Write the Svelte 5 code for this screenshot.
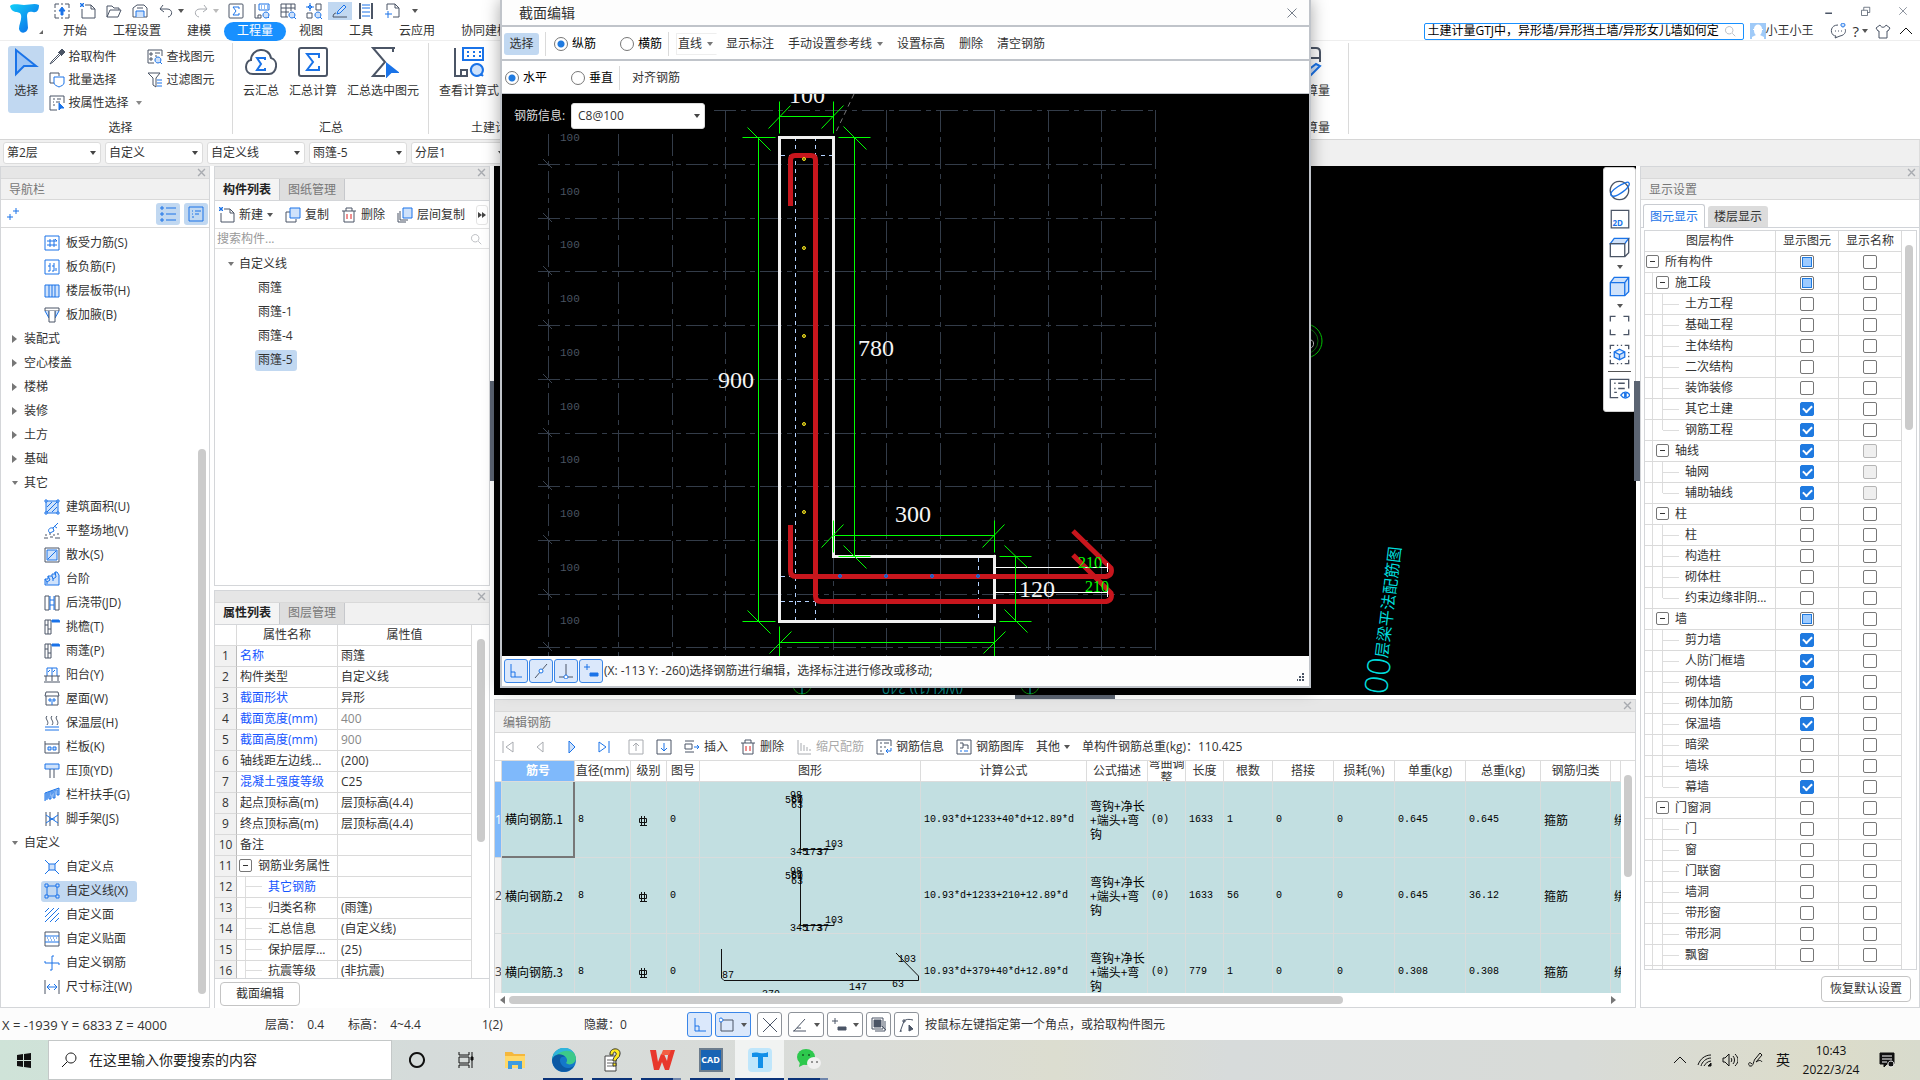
<script>
  const colours = {
    b: '#1a73e8', d: '#4b5566', g: '#a8abb0', r: '#e02020', l: '#cfe2fb', w: '#ffffff', k: '#111111', s: '#9cc4f5',
    n: 'none'
  };

  // Each icon is a list of [stroke, path, fill, stroke width] on a 16 x 16 field.
  const icons = {
    upload: [['d', 'M1 5V1H5M7 1H9M11 1H15V5M15 7V9M15 11V15H11M9 15H7M5 15H1V11M1 9V7', 'n', 1], ['b', 'M8 4L11 8H9V12H7V8H5Z', 'b', 1]],
    newdoc: [['d', 'M5 2H11L15 6V15H2V6', 'n', 1], ['d', 'M11 2V6H15', 'n', 1], ['b', 'M0 0L4 4M4 0L0 4M2 0V4M0 2H4', 'n', 1]],
    open: [['d', 'M1 14V3H6L8 5H13V7M1 14L4 7H15L12 14Z', 'n', 1]],
    save: [['d', 'M1 14V5L5 2H12L15 5V14Z', 'n', 1], ['b', 'M4 14V8H12V14', 'l', 1], ['d', 'M5 5H11', 'n', 1]],
    undo: [['d', 'M5 2L2 6L6 9M2 6H9C15 6 15 13 10 14', 'n', 1]],
    redo: [['g', 'M11 2L14 6L10 9M14 6H7C1 6 1 13 6 14', 'n', 1]],
    sigma: [['d', 'M1 2Q1 1 2 1H14Q15 1 15 2V14Q15 15 14 15H2Q1 15 1 14Z', 'n', 1], ['b', 'M11 6V4H5L8 8L5 12H11V10', 'n', 1]],
    calc: [['d', 'M1 1V15H7V12H4V15', 'n', 1], ['b', 'M5 1H15V7H5Z', 'n', 1], ['b', 'M7 3H8M10 3H11M13 3H14M7 5H8M10 5H11M13 5H14', 'n', 1], ['b', 'M12 9A3 3 0 1 1 11.900 9ZM14 14L15 15', 'l', 1]],
    gridfind: [['d', 'M15 7V1H1V14H8M1 5H15M1 9H9M6 1V14M11 1V8', 'n', 1], ['b', 'M12 9A3 3 0 1 1 11.900 9ZM14 14L16 16', 'l', 1]],
    nodes: [['b', 'M4 0V8M0 4H8M2 4L4 2L6 4L4 6Z', 'n', 1], ['d', 'M10 1H15V7H10ZM1 10H6V15H1Z', 'n', 1], ['b', 'M12 9A3 3 0 1 1 11.900 9ZM14 14L16 16', 'l', 1]],
    pen: [['b', 'M5 11L6 8L12 2L14 4L8 10Z', 'l', 1], ['d', 'M1 14H15M1 14C1 11 3 10 4 10', 'n', 1]],
    fence: [['d', 'M2 0V16M14 0V16', 'n', 2], ['b', 'M4 2H12M4 5H12M4 9H12M4 13H12', 'n', 1]],
    crop: [['d', 'M3 7V1H11L15 5V14H9M11 1V5H15', 'n', 1], ['b', 'M4 8V15M1 11H8', 'n', 1]],
    cursor: [['b', 'M3 2V14L7 10H13Z', 's', 1]],
    pick: [['d', 'M9 3L13 7M10 5L3 12L1 15L4 13L11 6', 'n', 1], ['d', 'M10 3L13 0L16 3L13 6Z', 'd', 1]],
    batch: [['d', 'M5 11H1V1H10V4', 'n', 1], ['b', 'M5 5H15V11C15 13 12 14 10 15C8 14 5 13 5 11Z', 'w', 1]],
    attrsel: [['d', 'M15 8V1H1V15H8M4 4H6M4 7H5M4 10H6M8 4H12M7 7H11', 'n', 1], ['b', 'M10 8V15L12 13H15Z', 'b', 1]],
    find: [['d', 'M15 7V1H1V14H7M3 4H5V6H3ZM3 9H5V11H3ZM8 4H13M8 7H10', 'n', 1], ['b', 'M11 8A3 3 0 1 1 10.900 8ZM13 13L15 15', 'l', 1]],
    filter: [['d', 'M1 1H13L9 6V15L6 13V6Z', 'n', 1], ['b', 'M10 8H15M10 11H15M10 14H15', 'n', 1]],
    cloud: [['d', 'M4 14C-1 14 0 7 3 7C3 1 12 0 13 6C17 7 16 14 12 14Z', 'n', 1], ['b', 'M10 7V6H6L8 9L6 12H10V11', 'n', 1]],
    sum: [['d', 'M14 1H3L9 8L3 15H9M13 1V3', 'n', 1], ['b', 'M10 9V15L12 13H15Z', 'b', 1]],
    edit: [['d', 'M6 9V1H13Q15 1 15 3V8M6 6H15', 'n', 1], ['b', 'M8 15L9 12L13 9L15 10L10 15Z', 'l', 1]],
    plus: [['b', 'M11 2V8M8 5H14M5 8V14M2 11H8', 'n', 1]],
    list: [['b', 'M1 1H3V3H1ZM1 7H3V9H1ZM1 13H3V15H1ZM6 2H16M6 8H16M6 14H16', 'n', 1]],
    card: [['b', 'M1 1H15V15H1Z', 'n', 1], ['b', 'M4 5H5M7 5H13M4 8H5M7 8H11M4 11H6', 'n', 1]],
    copy: [['d', 'M5 5H1V15H11V12', 'n', 1], ['b', 'M5 1H15V11H5Z', 'l', 1]],
    trash: [['d', 'M1 4H15M5 4V1H11V4M3 4V15H13V4', 'n', 1], ['r', 'M6 7V12M10 7V12', 'n', 1]],
    layers: [['d', 'M1 6V15H9M3 4V13H11', 'n', 1], ['b', 'M6 1H15V11H6Z', 'l', 1]],
    search: [['g', 'M7 2A5 5 0 1 1 6.900 2ZM11 11L15 15', 'n', 1]],
    slab1: [['b', 'M1 1H15V15H1ZM3 6H13M3 10H13M6 4V12M10 4V12M11 4L13 6', 'n', 1]],
    slab2: [['b', 'M1 1H15V15H1ZM6 4V12M10 4V12M4 7H6M8 7H10M4 12H6M8 12H10M12 9V12', 'n', 1]],
    band: [['b', 'M1 2H15V14H1Z', 'l', 1], ['b', 'M5 2V14M8 2V14M11 2V14', 'n', 1]],
    haunch: [['d', 'M1 1H15V4H1Z', 'w', 1], ['b', 'M1 4L5 11V4M15 4L11 11V4', 'l', 1], ['d', 'M5 4V15H11V4', 'w', 1]],
    area: [['b', 'M2 2H14V14H2ZM3 8L8 3M3 13L13 3M8 13L13 8', 'l', 1], ['b', 'M1 1H3V3H1ZM13 1H15V3H13ZM1 13H3V15H1ZM13 13H15V15H13Z', 'w', 1]],
    level: [['b', 'M6 10C3 8 5 4 9 5L10 8ZM9 5L14 0M10 3L13 5', 'n', 1], ['d', 'M1 12H3M5 11H7M9 12H11M13 11H15M0 15H4M6 14H9M11 15H16', 'n', 1]],
    apron: [['d', 'M1 1H15V15H1Z', 'n', 1], ['b', 'M3 3H13V13H3Z', 'l', 1], ['b', 'M4 12L12 4', 'n', 1]],
    stairs: [['b', 'M1 14V8H4V5H8V3H11V1H13L15 4V14Z', 'l', 1], ['b', 'M1 8L3 11L6 9L4 5M8 5L9 8L12 6L11 1M3 11V13M9 8V10', 'n', 1]],
    strip: [['d', 'M1 1H5V15H1ZM11 1H15V15H11Z', 'n', 1], ['b', 'M6 1V15M10 1V15M6 5H10M6 10H10', 'n', 1]],
    eave: [['d', 'M1 1H7V15H1ZM4 1V15M1 6H4M4 10H7', 'n', 1], ['b', 'M8 1H15L16 3H8Z', 'b', 1]],
    balcony: [['b', 'M3 9V1H13V9M8 1V9M4 5L6 3M9 5L11 3', 'n', 1], ['d', 'M0 9H16M2 9V14M14 9V14M8 9V14M0 15H16', 'n', 1]],
    roof: [['d', 'M2 1H14L15 5H1ZM2 5V14H14V5', 'n', 1], ['b', 'M5 8H7V10H5ZM9 8H11V10H9ZM8 10V14', 'n', 1]],
    warm: [['d', 'M3 1C0 4 6 6 3 10M8 1C5 4 11 6 8 10M13 1C10 4 16 6 13 10', 'n', 1], ['b', 'M1 12H15M1 15H15', 'n', 1]],
    rail: [['d', 'M1 2V14H15V2M1 5H15', 'n', 1], ['b', 'M4 8H7V11H4ZM9 8H12V11H9Z', 'l', 1]],
    coping: [['b', 'M1 1H15V6H1Z', 'l', 1], ['d', 'M6 6V15M10 6V15', 'n', 1]],
    handrail: [['b', 'M1 14V6L15 1V8H13V3M3 13V6M5 12V5M5 12H7V4M9 11V4M9 11H11V3', 's', 1]],
    scaffold: [['d', 'M2 1V15M14 1V15M6 1V15', 'n', 1], ['b', 'M2 4L14 12M2 12L14 4M5 8H11', 'n', 1]],
    cpoint: [['b', 'M5 5H11V11H5Z', 'l', 1], ['b', 'M1 1L5 5M15 1L11 5M1 15L5 11M15 15L11 11', 'n', 1]],
    cline: [['b', 'M3 3H13V13H3Z', 'n', 1], ['b', 'M1 1H4V4H1ZM12 1H15V4H12ZM1 12H4V15H1ZM12 12H15V15H12Z', 'l', 1]],
    cface: [['b', 'M1 5L5 1M1 10L10 1M1 15L15 1M6 15L15 6M11 15L15 11', 'n', 1]],
    cveneer: [['d', 'M1 1H15V15H1Z', 'n', 1], ['b', 'M1 5H15M1 11H15M3 7H4M6 7H7M9 7H10M12 7H13M4 9H5M7 9H8M10 9H11', 'l', 1]],
    crebar: [['b', 'M8 1V15H6M8 1H10M1 8H15M1 8V6M15 8V10', 'n', 1]],
    dim: [['d', 'M1 1V15M15 1V15', 'n', 1], ['b', 'M3 8H13M6 5L3 8L6 11M10 5L13 8L10 11', 'n', 1]],
    first: [['g', 'M3 2V14M13 3L6 8L13 13Z', 'n', 1]],
    prev: [['g', 'M11 3L5 8L11 13Z', 'n', 1]],
    next: [['b', 'M5 2L11 8L5 14Z', 'l', 1]],
    last: [['b', 'M3 3L10 8L3 13ZM13 2V14', 'n', 1]],
    up: [['g', 'M1 1H15V15H1ZM8 12V4M5 7L8 4L11 7', 'n', 1]],
    down: [['d', 'M1 1H15V15H1Z', 'n', 1], ['b', 'M8 4V12M5 9L8 12L11 9', 'n', 1]],
    insert: [['d', 'M1 2H10M1 13H10M1 5H8V10H1Z', 'n', 1], ['b', 'M10 8H15M13 6L15 8L13 10', 'n', 1]],
    scale: [['g', 'M2 1V15H15M5 4V12M8 6V12M11 8V12M14 10V12', 'n', 1]],
    info: [['d', 'M15 7V1H1V15H8M4 4H6M8 4H13M4 8H6M8 8H10M4 12H6', 'n', 1], ['b', 'M15 9V12H10M12 10L10 12L12 14', 'n', 1]],
    library: [['d', 'M1 1H15V15H1ZM4 4H7V9H4M7 6H12V10', 'n', 1], ['b', 'M4 12H6M8 12H12', 'n', 1]],
    orbit: [['d', 'M8 1A7 7 0 1 1 7.900 1Z', 'n', 1], ['b', 'M2 12C-2 9 14 0 15 2C18 5 5 14 2 12', 'n', 1]],
    flat: [['d', 'M1 1H15V15H1Z', 'n', 1]],
    cube: [['b', 'M1 5L4 1H15L12 5Z', 'l', 1], ['d', 'M1 5H12V15H1ZM15 1V12L12 15', 'n', 1]],
    cubef: [['b', 'M1 5L4 1H15V12L12 15H1Z', 'l', 1], ['b', 'M1 5H12V15M12 5L15 1', 'n', 1]],
    fit: [['d', 'M1 5V1H5M11 1H15V5M15 11V15H11M5 15H1V11', 'n', 1]],
    region: [['d', 'M1 4V1H4M6 1H7M9 1H10M12 1H15V4M15 6V7M15 9V10M15 12V15H12M10 15H9M7 15H6M4 15H1V12M1 10V9M1 7V6', 'n', 1], ['b', 'M8 4L12 6V10L8 12L4 10V6ZM4 6L8 8L12 6M8 8V12', 'l', 1]],
    view: [['d', 'M15 8V1H1V15H7M4 4H5M7 4H12M4 8H5M7 8H12M4 11H6', 'n', 1], ['b', 'M9 13C11 10 14 10 16 13C14 16 11 16 9 13ZM12 12H13V14H12Z', 'n', 1]],
    angle: [['b', 'M3 1V14H14M3 9H7V14', 'n', 1]],
    slash: [['d', 'M2 15L14 1', 'n', 1], ['b', 'M6 8A2 2 0 1 1 8 10A2 2 0 0 1 6 8Z', 'w', 1]],
    perp: [['d', 'M8 1V12M1 14H15', 'n', 1], ['b', 'M8 12A2 2 0 1 1 7.900 12Z', 'w', 1]],
    plusbox: [['b', 'M4 1V7M1 4H7', 'n', 1], ['b', 'M7 10H15V13H7Z', 'b', 1]],
    plusdark: [['d', 'M4 1V7M1 4H7', 'n', 1], ['d', 'M7 10H15V13H7Z', 'd', 1]],
    square: [['d', 'M2 3H14V14H2Z', 'n', 1], ['b', 'M2 1A2 2 0 1 1 1.900 1Z', 'w', 1]],
    cross: [['d', 'M1 1L15 15M15 1L1 15', 'n', 1]],
    lineangle: [['d', 'M2 14L13 2M1 14H14M5 11L9 11', 'n', 1]],
    region2: [['d', 'M1 1H12V12H1Z', 'n', 1], ['d', 'M3 3H10V10H3Z', 'd', 1], ['d', 'M14 4V14H4M11 9L15 13', 'n', 1]],
    curve: [['d', 'M1 15L5 4M5 4C7 2 10 2 14 3M1 14H3M4 3H6V5H4Z', 'n', 1], ['d', 'M10 8V14L14 12Z', 'd', 1]],
    close: [['g', 'M3 3L13 13M13 3L3 13', 'n', 2]],
    closed: [['d', 'M2 2L14 14M14 2L2 14', 'n', 1]],
    min: [['d', 'M3 11H12', 'n', 2]],
    restore: [['d', 'M2 7H10V14H2ZM5 7V3H13V10H10', 'n', 1]],
    chat: [['d', 'M8 2C-1 2 0 13 6 13L5 15L10 13C16 12 16 7 15 6M5 8H6M8 8H9M11 8H12', 'n', 1], ['b', 'M13 0A2 2 0 1 1 12.900 0Z', 'l', 1]],
    shirt: [['d', 'M5 2L1 5L3 8H4V15H12V8H13L15 5L11 2C10 5 6 5 5 2Z', 'n', 1]],
    caretup: [['k', 'M2 11L8 5L14 11', 'n', 1]],
    start: [['k', 'M1 3L7 2V8H1ZM8 2L15 1V8H8ZM1 9H7V15L1 14ZM8 9H15V16L8 15Z', 'k', 0]],
    lens: [['k', 'M10 1A5 5 0 1 1 9.900 1ZM6 10L1 15', 'n', 1]],
    ring: [['k', 'M8 1A7 7 0 1 1 7.900 1Z', 'n', 2]],
    tasks: [['k', 'M1 0V3H11V0M1 16V13H11V16M1 5H11V11H1ZM14 0V16', 'n', 1], ['k', 'M13 5H15V8H13Z', 'k', 1]],
    wifi: [['k', 'M1 13C3 7 8 3 14 3M4 14C5 10 9 6 14 6M7 14C8 12 11 9 14 9', 'n', 1], ['k', 'M11 14L14 11V14Z', 'k', 1]],
    sound: [['k', 'M1 6H3L7 2V14L3 10H1ZM9 6C10 7 10 9 9 10M11 4C13 6 13 10 11 12M13 2C17 6 17 10 13 14', 'n', 1]],
    ink: [['k', 'M5 12C1 8 1 14 3 14C7 15 6 8 9 6L13 1L15 3L9 10C12 8 14 8 15 10', 'n', 1]],
    note: [['k', 'M1 1H15V12H8L5 15V12H1Z', 'k', 1], ['w', 'M3 4H13M3 7H13M3 10H8', 'n', 1], ['w', 'M12 9A3 3 0 1 1 11.900 9Z', 'k', 1]]
  };

  const quickA = ['upload', 'newdoc', 'open', 'save'];
  const quickB = ['sigma', 'calc', 'gridfind', 'nodes', 'pen', 'fence', 'crop'];
  const tabs = ['开始', '工程设置', '建模', '工程量', '视图', '工具', '云应用', '协同建模'];
  const combos = ['第2层', '自定义', '自定义线', '雨篷-5', '分层1'];

  const nav = [
    ['slab1', '板受力筋(S)'], ['slab2', '板负筋(F)'], ['band', '楼层板带(H)'], ['haunch', '板加腋(B)'],
    ['>', '装配式'], ['>', '空心楼盖'], ['>', '楼梯'], ['>', '装修'], ['>', '土方'], ['>', '基础'], ['v', '其它'],
    ['area', '建筑面积(U)'], ['level', '平整场地(V)'], ['apron', '散水(S)'], ['stairs', '台阶'], ['strip', '后浇带(JD)'],
    ['eave', '挑檐(T)'], ['eave', '雨蓬(P)'], ['balcony', '阳台(Y)'], ['roof', '屋面(W)'], ['warm', '保温层(H)'],
    ['rail', '栏板(K)'], ['coping', '压顶(YD)'], ['handrail', '栏杆扶手(G)'], ['scaffold', '脚手架(JS)'],
    ['v', '自定义'], ['cpoint', '自定义点'], ['cline', '自定义线(X)'], ['cface', '自定义面'], ['cveneer', '自定义贴面'],
    ['crebar', '自定义钢筋'], ['dim', '尺寸标注(W)']
  ];

  // name, value, kind: l = linked name, m = muted value, g = group row, c = child row
  const props = [
    ['名称', '雨篷', 'l'], ['构件类型', '自定义线', ''], ['截面形状', '异形', 'l'], ['截面宽度(mm)', '400', 'lm'],
    ['截面高度(mm)', '900', 'lm'], ['轴线距左边线...', '(200)', ''], ['混凝土强度等级', 'C25', 'l'],
    ['起点顶标高(m)', '层顶标高(4.4)', ''], ['终点顶标高(m)', '层顶标高(4.4)', ''], ['备注', '', ''],
    ['钢筋业务属性', '', 'g'], ['其它钢筋', '', 'lc'], ['归类名称', '(雨篷)', 'c'], ['汇总信息', '(自定义线)', 'c'],
    ['保护层厚...', '(25)', 'c'], ['抗震等级', '(非抗震)', 'c']
  ];

  // level, name, element state, name state: 0 off, 1 on, 2 partial, 3 disabled
  const layers = [
    [0, '所有构件', 2, 0], [1, '施工段', 2, 0], [2, '土方工程', 0, 0], [2, '基础工程', 0, 0], [2, '主体结构', 0, 0],
    [2, '二次结构', 0, 0], [2, '装饰装修', 0, 0], [2, '其它土建', 1, 0], [2, '钢筋工程', 1, 0], [1, '轴线', 1, 3],
    [2, '轴网', 1, 3], [2, '辅助轴线', 1, 3], [1, '柱', 0, 0], [2, '柱', 0, 0], [2, '构造柱', 0, 0], [2, '砌体柱', 0, 0],
    [2, '约束边缘非阴...', 0, 0], [1, '墙', 2, 0], [2, '剪力墙', 1, 0], [2, '人防门框墙', 1, 0], [2, '砌体墙', 1, 0],
    [2, '砌体加筋', 0, 0], [2, '保温墙', 1, 0], [2, '暗梁', 0, 0], [2, '墙垛', 0, 0], [2, '幕墙', 1, 0], [1, '门窗洞', 0, 0],
    [2, '门', 0, 0], [2, '窗', 0, 0], [2, '门联窗', 0, 0], [2, '墙洞', 0, 0], [2, '带形窗', 0, 0], [2, '带形洞', 0, 0],
    [2, '飘窗', 0, 0], [2, '', 0, 0]
  ];
  const lastChild = (i) => Boolean(layers[i + 1]) && layers[i + 1][0] < 2;

  const columns = [
    ['', 7], ['筋号', 73], ['直径(mm)', 56], ['级别', 36], ['图号', 33], ['图形', 0], ['计算公式', 166], ['公式描述', 61],
    ['弯曲调整', 38], ['长度', 38], ['根数', 49], ['搭接', 61], ['损耗(%)', 61], ['单重(kg)', 71], ['总重(kg)', 75],
    ['钢筋归类', 70], ['', 10]
  ];
  const bars = [
    ['横向钢筋.1', '10.93*d+1233+40*d+12.89*d', '1633', '1', '0.645', '0.645'],
    ['横向钢筋.2', '10.93*d+1233+210+12.89*d', '1633', '56', '0.645', '36.12'],
    ['横向钢筋.3', '10.93*d+379+40*d+12.89*d', '779', '1', '0.308', '0.308']
  ];

  const gridX = [618, 672, 725, 779, 833, 886, 940, 994, 1048, 1101, 1155];
  const gridY = [164, 218, 271, 325, 379, 433, 486, 540, 594, 647];
  const dims = [
    'M779 116H833M779 101V133M833 101V133M768 128L790 105M821 128L843 105',
    'M758 137V621M742 137H775M747 127L770 150M742 621H775M747 610L770 633',
    'M854 137V556M838 137H870M843 126L866 149M838 556H870M843 545L866 568',
    'M833 535H994M833 520V552M994 520V552M821 547L843 524M982 547L1004 524',
    'M1015 556V621M999 556H1031M1004 545L1027 567M999 621H1031M1004 609L1027 632',
    'M779 642H994M779 626V656M994 626V656M769 653L791 631M983 653L1005 631'
  ];
</script>

{#snippet icon(name, size = 16)}
  <svg class="ico" width={size} height={size} viewBox="0 0 16 16" aria-hidden="true">
    {#each icons[name] as [stroke, d, fill, width]}
      <path {d} stroke={colours[stroke]} fill={colours[fill]} stroke-width={width} />
    {/each}
  </svg>
{/snippet}

{#snippet strip()}
  <div class="strip"><button aria-label="关闭">{@render icon('close', 11)}</button></div>
{/snippet}

<div class="app">
  <header>
    <button class="logo" aria-label="菜单">
      <svg width="30" height="30" viewBox="0 0 30 30" aria-hidden="true">
        <defs><linearGradient id="tg" x1="0" y1="0" x2="1" y2="1"><stop offset="0" stop-color="#12d0f8" /><stop offset="1" stop-color="#0a62e8" /></linearGradient></defs>
        <path d="M1 2C5 -1 10 1 15 1S26 -1 30 1C30 6 28 9 24 8C20 7 18 8 18 12L19 24C18 30 11 30 10 25C10 20 13 16 12 11C11 6 3 11 1 2Z" fill="url(#tg)" />
      </svg>
      <i class="corner"></i>
    </button>
    <div class="headmain">
      <div class="quick">
        {#each quickA as q}<button aria-label={q}>{@render icon(q)}</button>{/each}
        <span class="split"><button aria-label="撤销">{@render icon('undo')}</button><i class="tri"></i></span>
        <span class="split"><button aria-label="重做">{@render icon('redo')}</button><i class="tri pale"></i></span>
        {#each quickB as q}<button class:on={q === 'pen'} aria-label={q}>{@render icon(q)}</button>{/each}
        <i class="tri more"></i>
        <div class="wins">
          <button aria-label="最小化">{@render icon('min', 12)}</button>
          <button aria-label="还原">{@render icon('restore', 12)}</button>
          <button aria-label="退出">{@render icon('closed', 10)}</button>
        </div>
      </div>
      <nav class="tabs">
        {#each tabs as t}<button class:on={t === '工程量'}>{t}</button>{/each}
        <div class="right">
          <label class="help"><input aria-label="搜索帮助" value="土建计量GTJ中，异形墙/异形挡土墙/异形女儿墙如何定" />{@render icon('search', 12)}</label>
          <svg class="avatar" width="16" height="16" viewBox="0 0 16 16" aria-hidden="true"><path d="M0 0H16V16H0Z" fill="#9fcaf8" /><path d="M4 6C4 0 12 0 12 6H13V7H12C12 11 10 12 10 12L14 14V16H2V14L6 12C4 11 4 7 4 7H3V6Z" fill="#fff" /></svg>
          <span class="user">小王小王</span>
          <button aria-label="消息">{@render icon('chat')}</button>
          <button class="q">?<i class="tri"></i></button>
          <button aria-label="皮肤">{@render icon('shirt')}</button>
          <button aria-label="收起">{@render icon('caretup')}</button>
        </div>
      </nav>
    </div>
  </header>

  <div class="ribbon">
    <section class="grp first">
      <div class="tools">
        <button class="big on">{@render icon('cursor', 32)}<span>选择</span></button>
        <div class="col">
          <button>{@render icon('pick')}拾取构件</button>
          <button>{@render icon('batch')}批量选择</button>
          <button>{@render icon('attrsel')}按属性选择<i class="tri"></i></button>
        </div>
        <div class="col">
          <button>{@render icon('find')}查找图元</button>
          <button>{@render icon('filter')}过滤图元</button>
        </div>
      </div>
      <h2>选择</h2>
    </section>
    <section class="grp">
      <div class="tools gap">
        <button class="big">{@render icon('cloud', 32)}<span>云汇总</span></button>
        <button class="big">{@render icon('sigma', 32)}<span>汇总计算</span></button>
        <button class="big">{@render icon('sum', 32)}<span>汇总选中图元</span></button>
      </div>
      <h2>汇总</h2>
    </section>
    <section class="grp results">
      <div class="tools gap"><button class="big">{@render icon('calc', 32)}<span>查看计算式</span></button></div>
      <h2>土建计算结果</h2>
    </section>
    <section class="grp sheet">
      <div class="tools"><button class="big">{@render icon('edit', 32)}<span>表格算量</span></button></div>
      <h2>表格算量</h2>
    </section>
  </div>

  <div class="combos">
    {#each combos as c}
      <span class="sel"><select aria-label={c}><option>{c}</option></select></span>
    {/each}
  </div>

  <main>
    <aside class="panel navp">
      {@render strip()}
      <h3>导航栏</h3>
      <div class="navtools">
        {@render icon('plus')}
        <button aria-label="列表">{@render icon('list')}</button>
        <button aria-label="卡片">{@render icon('card')}</button>
      </div>
      <ul class="navlist">
        {#each nav as [ic, name]}
          {#if ic === '>' || ic === 'v'}
            <li class="cat"><i class={ic === '>' ? 'arr' : 'tri'}></i>{name}</li>
          {:else}
            <li class:sel={ic === 'cline'}><button>{@render icon(ic)}{name}</button></li>
          {/if}
        {/each}
      </ul>
      <i class="thumb navthumb"></i>
    </aside>

    <div class="second">
      <section class="panel comps">
        {@render strip()}
        <div class="ptabs"><button class="on">构件列表</button><button>图纸管理</button></div>
        <div class="ctools">
          <button>{@render icon('newdoc')}新建<i class="tri"></i></button>
          <button>{@render icon('copy')}复制</button>
          <button>{@render icon('trash')}删除</button>
          <button>{@render icon('layers')}层间复制</button>
          <button class="more" aria-label="更多"><i class="arr"></i><i class="arr"></i></button>
        </div>
        <label class="csearch"><input placeholder="搜索构件..." aria-label="搜索构件" />{@render icon('search', 12)}</label>
        <ul class="tree">
          <li><i class="tri"></i>自定义线</li>
          {#each ['雨篷', '雨篷-1', '雨篷-4', '雨篷-5'] as t}
            <li class="leaf"><button class:on={t === '雨篷-5'}>{t}</button></li>
          {/each}
        </ul>
      </section>
      <section class="panel propp">
        {@render strip()}
        <div class="ptabs"><button class="on">属性列表</button><button>图层管理</button></div>
        <div class="ptable">
          <table>
            <colgroup><col class="c1" /><col class="c2" /><col /></colgroup>
            <thead><tr><th></th><th>属性名称</th><th>属性值</th></tr></thead>
            <tbody>
              {#each props as [name, value, kind], i}
                <tr>
                  <td class="n">{i + 1}</td>
                  <td class:link={kind.includes('l')} class:child={kind.includes('c')} class:group={kind === 'g'}>
                    {#if kind === 'g'}<i class="exp"></i>{/if}{name}
                  </td>
                  <td class:muted={kind.includes('m')}>{value}</td>
                </tr>
              {/each}
            </tbody>
          </table>
          <div class="rail"><i class="thumb"></i></div>
        </div>
        <div class="pfoot"><button class="btn">截面编辑</button></div>
      </section>
    </div>

    <div class="centre">
      <div class="viewport">
        <svg class="scene" viewBox="494 166 1142 529" preserveAspectRatio="xMaxYMax slice" aria-hidden="true">
          <circle cx="1305" cy="341" r="17" fill="none" stroke="#00c800" stroke-width="1" />
          <circle cx="1305" cy="341" r="13" fill="none" stroke="#0a6a0a" stroke-width="1" />
          <path d="M1311 340C1315 341 1314 348 1310 348" stroke="#ccc" fill="none" />
          <g transform="translate(1399 547) rotate(-83)" fill="#00dcdc">
            <text class="cad" text-anchor="end" x="0" y="2">层梁平法配筋图</text>
            <text class="zero" text-anchor="end" x="-112" y="6">000</text>
          </g>
          <g fill="none" stroke="#089008"><circle cx="802" cy="685" r="9" /><circle cx="1030" cy="685" r="9" /></g>
          <path d="M802 688V694M1030 688V694" stroke="#0cc" />
          <text transform="translate(963 684) rotate(180)" class="dimcad">(WKL(1)) 240</text>
        </svg>
        <div class="palette">
          <button aria-label="动态观察">{@render icon('orbit', 21)}</button>
          <button aria-label="二维" class="two">{@render icon('flat', 20)}<b>2D</b></button>
          <button aria-label="线框">{@render icon('cube', 21)}</button><i class="tri"></i>
          <button aria-label="实体">{@render icon('cubef', 21)}</button><i class="tri"></i>
          <button aria-label="全屏">{@render icon('fit', 21)}</button>
          <button aria-label="局部">{@render icon('region', 21)}</button>
          <hr />
          <button aria-label="显示">{@render icon('view', 21)}</button>
        </div>
      </div>
      <div class="hsplit"><i></i></div>
      <section class="panel bars">
        {@render strip()}
        <h3>编辑钢筋</h3>
        <div class="btools">
          {#each ['first', 'prev', 'next', 'last'] as n}<button class="step" aria-label={n}>{@render icon(n)}</button>{/each}
          <button aria-label="上移">{@render icon('up')}</button>
          <button aria-label="下移">{@render icon('down')}</button>
          <button>{@render icon('insert')}插入</button>
          <button>{@render icon('trash')}删除</button>
          <button class="off" disabled>{@render icon('scale')}缩尺配筋</button>
          <button>{@render icon('info')}钢筋信息</button>
          <button>{@render icon('library')}钢筋图库</button>
          <button>其他<i class="tri"></i></button>
          <span>单构件钢筋总重(kg)：110.425</span>
        </div>
        <div class="btable">
          <table>
            <colgroup>{#each columns as [, w]}<col style={w ? `width:${w}px` : ''} />{/each}</colgroup>
            <thead><tr>{#each columns as [c], i}<th class:on={i === 1}><span>{c}</span></th>{/each}</tr></thead>
            <tbody>
              {#each bars as [name, formula, len, count, unit, total], i}
                <tr>
                  <td class="idx" class:on={i === 0}>{i + 1}</td>
                  <td class="name" class:on={i === 0}>{name}</td>
                  <td>8</td>
                  <td><svg class="grade" width="12" height="12" viewBox="0 0 12 12" aria-label="三级钢"><path d="M2.500 4.500H9.500V8.500H2.500ZM4.500 2V11M7.500 2V11M3 11.500H10" fill="none" stroke="#111" /></svg></td>
                  <td>0</td>
                  <td class="shape">
                    {#if i < 2}
                      <svg width="220" height="74" viewBox="700 782 220 74">
                        <path d="M800.500 797V848.500H834V844" fill="none" stroke="#111" />
                        <text x="785" y="802">560</text><text x="790" y="797">98</text><text x="791" y="801">87</text><text x="791" y="807">63</text>
                        <text x="825" y="846">103</text><text x="790" y="854">345</text><text x="804" y="854">173</text><text x="817" y="854">37</text>
                      </svg>
                    {:else}
                      <svg width="220" height="74" viewBox="700 934 220 74">
                        <path d="M721.500 948V977L724 979.500H918.500V975L896 952" fill="none" stroke="#111" />
                        <text x="722" y="977">87</text><text x="898" y="961">103</text><text x="849" y="989">147</text><text x="892" y="986">63</text><text x="762" y="996">379</text>
                      </svg>
                    {/if}
                  </td>
                  <td>{formula}</td>
                  <td class="desc">弯钩+净长<br />+端头+弯<br />钩</td>
                  <td>(0)</td><td>{len}</td><td>{count}</td><td>0</td><td>0</td><td>{unit}</td><td>{total}</td>
                  <td class="zh">箍筋</td><td class="zh cut">绑</td>
                </tr>
              {/each}
            </tbody>
          </table>
          <div class="rail"><i class="thumb"></i></div>
        </div>
        <div class="hbar"><i class="arr back"></i><div><i class="thumb"></i></div><i class="arr"></i></div>
      </section>
      <i class="vhandle left"></i><i class="vhandle right"></i>
    </div>

    <aside class="panel disp">
      {@render strip()}
      <h3>显示设置</h3>
      <div class="dtabs"><button class="on">图元显示</button><button>楼层显示</button></div>
      <div class="dtable">
        <table>
          <colgroup><col /><col class="cc" /><col class="cc" /></colgroup>
          <thead><tr><th>图层构件</th><th>显示图元</th><th>显示名称</th></tr></thead>
          <tbody>
            {#each layers as [lvl, name, a, b], i}
              <tr>
                <td class="lv{lvl}" class:end={lvl === 2 && lastChild(i)}>{#if lvl < 2}<i class="exp"></i>{/if}{name}</td>
                <td class="ck"><input type="checkbox" aria-label="{name} 显示图元" checked={a === 1} class:part={a === 2} /></td>
                <td class="ck"><input type="checkbox" aria-label="{name} 显示名称" disabled={b === 3} /></td>
              </tr>
            {/each}
          </tbody>
        </table>
        <div class="rail"><i class="thumb"></i></div>
      </div>
      <div class="dfoot"><button class="btn">恢复默认设置</button></div>
    </aside>
  </main>

  <footer class="status">
    <span class="s1">X = -1939 Y = 6833 Z = 4000</span>
    <span class="s2">层高：&nbsp; 0.4</span>
    <span class="s3">标高：&nbsp; 4~4.4</span>
    <span class="s4">1(2)</span>
    <span class="s5">隐藏：0</span>
    <div class="sb">
      <button class="on" aria-label="正交">{@render icon('angle')}</button>
      <button class="on wide" aria-label="捕捉">{@render icon('square')}<i class="tri"></i></button>
      <button class="apart" aria-label="取消">{@render icon('cross')}</button>
      <button class="wide apart" aria-label="角度">{@render icon('lineangle')}<i class="tri"></i></button>
      <button class="wide" aria-label="动态输入">{@render icon('plusdark')}<i class="tri"></i></button>
      <button aria-label="框选">{@render icon('region2')}</button>
      <button aria-label="曲线">{@render icon('curve')}</button>
    </div>
    <span>按鼠标左键指定第一个角点，或拾取构件图元</span>
  </footer>

  <div class="taskbar">
    <button class="start" aria-label="开始">{@render icon('start')}</button>
    <label class="tsearch">{@render icon('lens')}<input placeholder="在这里输入你要搜索的内容" aria-label="搜索" /></label>
    <button class="app-b" aria-label="Cortana">{@render icon('ring')}</button>
    <button class="app-b" aria-label="任务视图">{@render icon('tasks')}</button>
    <button class="app-b" aria-label="文件夹"><svg width="22" height="22" viewBox="0 0 22 22"><path d="M1 3H8L10 5H21V19H1Z" fill="#f5b73c" /><path d="M1 7H21V19H1Z" fill="#ffd869" /><path d="M4 20V12H18V20H14V16H8V20Z" fill="#3d9be0" /></svg></button>
    <button class="app-b run" aria-label="Edge"><svg width="24" height="24" viewBox="0 0 24 24"><circle cx="12" cy="12" r="12" fill="#1477c9" /><path d="M1 8C5 -3 22 -2 24 10C24 16 17 18 14 15C17 11 13 7 9 7C5 7 2 9 0 12Z" fill="#3cc98a" /><path d="M1 8C4 -2 17 -3 22 5C14 0 6 4 0 12Z" fill="#2fb4dc" /><path d="M0 12C1 6 10 4 13 9C7 7 6 15 12 19C15 21 19 20 22 18C17 27 1 26 0 12Z" fill="#0c59a4" /></svg></button>
    <button class="app-b run" aria-label="帮助"><svg width="20" height="24" viewBox="0 0 20 24"><path d="M2 8H13V23H2Z" fill="#fff" stroke="#444" /><path d="M4 12H11M4 15H11M4 18H11" stroke="#666" /><path d="M7 7C6 -1 18 -1 17 6C17 10 13 10 13 13H10C10 8 14 8 13 5C12 3 10 4 10 7ZM10 15H13V18H10Z" fill="#ffe920" stroke="#333" /></svg></button>
    <button class="app-b run two" aria-label="WPS"><svg width="26" height="22" viewBox="0 0 26 22"><path d="M1 1H7L9 13L12 5H15L18 12L20 1H26L20 21H16L13 13L10 21H5Z" fill="#e8382c" /><path d="M14 1H22L20 6H12Z" fill="#f25f44" /></svg></button>
    <button class="app-b run" aria-label="CAD"><span class="cadico">CAD</span></button>
    <button class="app-b run active" aria-label="土建计量"><svg width="24" height="24" viewBox="0 0 24 24"><rect width="24" height="24" rx="4" fill="#bfe6fb" /><path d="M4 5C8 3 16 7 20 4V9H15L15 20H10L10 9H4Z" fill="#118fe8" /></svg></button>
    <button class="app-b run two" aria-label="微信"><svg width="24" height="22" viewBox="0 0 24 22"><ellipse cx="9" cy="8" rx="9" ry="8" fill="#2dc84d" /><path d="M3 13L2 18L8 15Z" fill="#2dc84d" /><ellipse cx="17" cy="14" rx="7" ry="6" fill="#f0f0f0" /><circle cx="6" cy="6" r="1" fill="#145c24" /><circle cx="12" cy="6" r="1" fill="#145c24" /><circle cx="15" cy="13" r="1" fill="#777" /><circle cx="20" cy="13" r="1" fill="#777" /></svg></button>
    <div class="tray">
      {@render icon('caretup')}{@render icon('wifi')}{@render icon('sound')}{@render icon('ink')}
      <span class="ime">英</span>
      <span class="clock">10:43<br />2022/3/24</span>
      {@render icon('note')}
    </div>
  </div>

  <div class="dialog" role="dialog" aria-label="截面编辑">
    <div class="dtitle"><span>截面编辑</span><button aria-label="关闭">{@render icon('closed', 12)}</button></div>
    <div class="drow">
      <button class="on">选择</button>
      <i class="bar"></i>
      <label class="r1"><input type="radio" name="dir" checked />纵筋</label>
      <label><input type="radio" name="dir" />横筋</label>
      <i class="bar near"></i>
      <button class="line">直线<i class="tri"></i></button>
      <button>显示标注</button>
      <button>手动设置参考线<i class="tri"></i></button>
      <button>设置标高</button>
      <button>删除</button>
      <button>清空钢筋</button>
    </div>
    <div class="drow low">
      <label><input type="radio" name="axis" checked />水平</label>
      <label><input type="radio" name="axis" />垂直</label>
      <i class="bar near"></i>
      <button class="align">对齐钢筋</button>
    </div>
    <div class="canvas">
      <svg viewBox="502 94 807 562" aria-label="截面图">
        <g stroke="#333c49" stroke-dasharray="22 5 5 5" shape-rendering="crispEdges">
          <path d="M714 110H1155" />
          {#each gridY as y}<path d="M538 {y}H1155" />{/each}
          {#each gridX as x, i}<path d="M{x} {i < 2 ? 134 : 110}V656" />{/each}
          <path d="M548 134V656" />
        </g>
        {#each gridY as y}
          <path d="M543 {y - 5}L552 {y + 4}" stroke="#3a4350" />
          <text class="tick" x="560" y={y - 23}>100</text>
        {/each}
        <path d="M854 94L836 132" stroke="#777" stroke-dasharray="5 4" />
        <g fill="none" stroke="#b4d2ff" stroke-dasharray="4 4" shape-rendering="crispEdges">
          <path d="M795.500 137V621M815.500 137V155M815.500 602V621M781 155.500H833M978.500 558V621M781 576.500H790M781 601.500H815" />
        </g>
        <path d="M779.500 137.500H833.500V556.500H994.500V621.500H779.500Z" fill="none" stroke="#f0f0f0" stroke-width="3" />
        <g fill="none" stroke="#c8161d" stroke-width="5">
          <path d="M790.500 206V160Q790.500 155.500 795 155.500H811Q815.500 155.500 815.500 160V596Q815.500 601.500 821 601.500H1106Q1113 600 1111 593L1073 555" />
          <path d="M790.500 525V571Q790.500 576.500 796 576.500H1106Q1113 575 1111 568L1073 531" />
        </g>
        <path d="M995 567.500H1107M1107.500 563V572M995 592.500H1107M1107.500 588V597" stroke="#fff" />
        <g fill="none" stroke="#00ff00">{#each dims as d}<path {d} transform="translate(.5 .5)" />{/each}</g>
        {#each [159, 248, 336, 424, 512] as y}<circle cx="804" cy={y} r="1.500" fill="#6b6010" stroke="#f2e21c" />{/each}
        {#each [840, 886, 932, 978] as x}<circle cx={x} cy="576" r="1.500" fill="#2554a0" stroke="#1a73e8" />{/each}
        <g class="big-n">
          <text x="789" y="103">100</text><text x="858" y="356">780</text><text x="718" y="388">900</text><text x="895" y="522">300</text><text x="1019" y="597">120</text>
        </g>
        <g class="small-n"><text x="1078" y="568">210</text><text x="1085" y="592">210</text></g>
      </svg>
      <div class="over">
        <label for="rebar">钢筋信息:</label>
        <span class="sel"><select id="rebar"><option>C8@100</option></select></span>
      </div>
    </div>
    <div class="dstat">
      <button aria-label="正交">{@render icon('angle')}</button>
      <button aria-label="中点">{@render icon('slash')}</button>
      <button aria-label="垂足">{@render icon('perp')}</button>
      <button aria-label="输入">{@render icon('plusbox')}</button>
      <span>(X: -113 Y: -260)选择钢筋进行编辑，选择标注进行修改或移动;</span>
      <svg width="7" height="9" viewBox="0 0 7 9" aria-hidden="true"><path d="M5 0H7V2H5ZM5 3H7V5H5ZM5 6H7V8H5ZM2 3H4V5H2ZM2 6H4V8H2ZM0 6H1V8H0Z" fill="#4b5566" /></svg>
    </div>
  </div>
</div>

<style>
  :global(body) { margin: 0; overflow: hidden; }
  .app, .app :global(*) { box-sizing: border-box; }
  .app {
    position: relative; display: flex; flex-direction: column; height: 100vh; background: #fff; color: #333;
    font: 12px/16px "Open Sans", "Noto Sans CJK SC", sans-serif;
  }
  button, input, select { font: inherit; color: inherit; }
  button { border: 0; background: none; padding: 0; white-space: nowrap; display: flex; align-items: center; }
  input { border: 0; background: none; padding: 0; min-width: 0; outline: 0; }
  i { font-style: normal; flex: none; }
  ul { list-style: none; margin: 0; padding: 0; }
  h2, h3 { margin: 0; font-size: 12px; font-weight: 400; }
  span { white-space: nowrap; }
  .ico { flex: none; display: block; }
  .tri { display: inline-block; border: 3px solid transparent; border-top: 4px solid #555; border-bottom: 0; }
  .tri.pale { border-top-color: #bbb; }
  .arr { display: inline-block; border: 4px solid transparent; border-left: 5px solid #777; border-right: 0; }
  .arr.back { transform: rotate(180deg); }
  .thumb { display: block; background: #cbcbcb; border-radius: 4px; }
  .sel { position: relative; display: flex; }
  .sel select { appearance: none; width: 100%; background: #fff; border: 1px solid #dcdcdc; border-radius: 3px; padding: 0 3px; }
  .sel::after { content: ""; position: absolute; right: 5px; top: 50%; margin-top: -2px; border: 3px solid transparent; border-top: 4px solid #444; border-bottom: 0; }

  header { display: flex; height: 41px; border-bottom: 1px solid #eee; }
  .logo { position: relative; width: 50px; padding: 4px 0 6px 9px; align-items: flex-start; }
  .corner { position: absolute; right: 7px; bottom: 6px; border: 2px solid transparent; border-right-color: #666; border-bottom-color: #666; }
  .headmain { flex: 1; min-width: 0; }
  .quick { display: flex; height: 21px; align-items: center; gap: 2px; }
  .quick button { width: 24px; height: 18px; justify-content: center; }
  .quick button.on { background: #c1d8f1; }
  .quick .split { display: flex; align-items: center; width: 33px; }
  .quick .more { margin-left: 6px; }
  .quick .wins { margin-left: auto; display: flex; gap: 13px; padding-right: 5px; }
  .tabs { display: flex; height: 20px; align-items: center; }
  .tabs > button { padding: 0 13px; height: 19px; border-radius: 10px; }
  .tabs > button.on { background: #1890ff; color: #fff; }
  .right { margin-left: auto; display: flex; align-items: center; padding-right: 6px; }
  .right > button { margin-left: 7px; }
  .help { display: flex; align-items: center; width: 320px; height: 17px; border: 1px solid #1890ff; border-radius: 2px; padding: 0 7px 0 3px; color: #000; }
  .help input { flex: 1; }
  .avatar { margin-left: 6px; }
  .user { margin-right: 9px; }
  .q { font-size: 15px; gap: 3px; }

  .ribbon { display: flex; height: 99px; border-bottom: 1px solid #d6d6d6; }
  .grp { position: relative; display: flex; flex-direction: column; padding: 0 10px; }
  .grp::after { content: ""; position: absolute; right: 0; top: 2px; bottom: 5px; width: 1px; background: #dadada; }
  .grp.first { padding: 0 0 0 8px; width: 233px; }
  .grp.results { width: 156px; }
  .grp.sheet { margin-left: 690px; padding: 0 19px 0 7px; }
  .tools { display: flex; flex: 1; padding-top: 5px; }
  .tools.gap { gap: 10px; }
  .grp h2 { height: 19px; text-align: center; line-height: 16px; }
  .big { flex-direction: column; height: 67px; gap: 5px; }
  .big.on { background: #c1d8f1; width: 40px; border-radius: 3px; }
  .col { display: flex; flex-direction: column; margin-left: 5px; width: 94px; }
  .col button { height: 23px; gap: 3px; margin-top: -1px; margin-bottom: 1px; }
  .col .tri { margin-left: 5px; border-top-color: #888; }

  .combos { display: flex; gap: 4px; height: 26px; padding: 2px 3px; background: #f0f0f0; border-right: 1px solid #ddd; }
  .combos .sel { width: 98px; height: 22px; }

  main { flex: 1; min-height: 0; display: grid; grid-template-columns: 210px 276px minmax(0, 1fr) 280px; grid-template-rows: minmax(0, 1fr); gap: 4px; }
  .panel { position: relative; display: flex; flex-direction: column; min-height: 0; border: 1px solid #d4d6d9; background: #fff; overflow: hidden; }
  .strip { flex: none; height: 11px; background: #e6e6e6; display: flex; justify-content: flex-end; align-items: center; padding-right: 2px; }
  h3 { flex: none; height: 22px; line-height: 21px; background: #f1f1f1; border-top: 1px solid #d9d9d9; border-bottom: 1px solid #d9d9d9; padding-left: 8px; color: #777; }

  .navtools { flex: none; display: flex; align-items: center; gap: 4px; height: 28px; border-bottom: 1px solid #d9d9d9; padding: 0 1px 0 4px; }
  .navtools button { width: 24px; height: 22px; justify-content: center; background: #c1d8f1; border-radius: 3px; }
  .navtools button:nth-of-type(1) { margin-left: auto; }
  .navlist { padding-top: 3px; }
  .navlist li { height: 24px; display: flex; align-items: center; padding-left: 40px; }
  .navlist li button { gap: 6px; height: 21px; padding: 0 9px 0 3px; border-radius: 3px; }
  .navlist li.sel button { background: #c1d8f1; }
  .navlist li.cat { padding-left: 11px; gap: 6px; }
  .navlist .arr { margin-right: 1px; }
  .navlist .tri, .tree .tri { border-top-color: #777; }
  .navthumb { position: absolute; right: 3px; bottom: 13px; width: 8px; height: 545px; }

  .second { display: flex; flex-direction: column; gap: 4px; min-height: 0; }
  .comps { flex: 1; }
  .propp { flex: 1; border-bottom: 0; }
  .ptabs { flex: none; display: flex; height: 23px; background: #f1f1f1; border-top: 1px solid #d9d9d9; border-bottom: 1px solid #d4d6d9; }
  .ptabs button { width: 65px; justify-content: center; background: #dedede; color: #777; border-right: 1px solid #c6c8cc; }
  .ptabs button.on { background: #f4f4f4; color: #222; font-weight: 700; }
  .ctools { flex: none; display: flex; align-items: center; gap: 12px; height: 28px; padding-left: 4px; border-bottom: 1px solid #e2e2e2; }
  .ctools button { gap: 4px; }
  .ctools .more { gap: 0; height: 20px; padding: 0 1px; margin-left: -1px; border: 1px solid #e4e4e4; border-radius: 3px; }
  .ctools .more .arr { border-width: 3px; border-left: 4px solid #444; border-right: 0; }
  .csearch { flex: none; display: flex; align-items: center; height: 20px; padding: 0 7px 0 2px; border-bottom: 1px solid #e2e2e2; }
  .csearch input { flex: 1; }
  input::placeholder { color: #999; opacity: 1; }
  .tree { padding-top: 3px; }
  .tree li { height: 24px; display: flex; align-items: center; padding-left: 13px; gap: 5px; }
  .tree li.leaf { padding-left: 40px; }
  .tree button { padding: 0 4px 0 3px; height: 21px; border-radius: 3px; }
  .tree button.on { background: #c1d8f1; }

  table { border-collapse: separate; border-spacing: 0; table-layout: fixed; width: 100%; }
  th { font-weight: 400; padding: 0; }
  td { padding: 0; }
  .ptable { flex: 1; min-height: 0; display: flex; overflow: hidden; border-bottom: 1px solid #d4d6d9; }
  .ptable table { flex: 1; align-self: flex-start; }
  .c1 { width: 22px; }
  .c2 { width: 101px; }
  .ptable th, .ptable td { height: 21px; border-right: 1px solid #dadada; border-bottom: 1px solid #dadada; white-space: nowrap; }
  .ptable td { padding-left: 3px; }
  .ptable td.n { background: #f1f1f1; text-align: center; padding: 0; border-right-color: #bbb; }
  .link { color: #1455ff; }
  .muted { color: #888; }
  .ptable td.child { padding-left: 31px; background: linear-gradient(#ddd, #ddd) 8px 0/1px 100% no-repeat, linear-gradient(#ddd, #ddd) 8px 9px/17px 1px no-repeat; }
  .exp { display: inline-block; position: relative; width: 13px; height: 13px; border: 1px solid #777; border-radius: 2px; margin-right: 6px; vertical-align: -2px; background: #fff; }
  .exp::after { content: ""; position: absolute; left: 3px; right: 3px; top: 5px; height: 1px; background: #333; }
  .ptable td.group { padding-left: 2px; }
  .rail { flex: none; width: 17px; padding: 14px 4px 0 5px; }
  .ptable .rail .thumb { height: 203px; }
  .pfoot { flex: none; height: 29px; padding: 3px 5px; }
  .btn { justify-content: center; width: 80px; height: 24px; border: 1px solid #c4c4c4; border-radius: 4px; background: #fff; }

  .centre { position: relative; display: flex; flex-direction: column; min-width: 0; }
  .viewport { position: relative; flex: 1; min-height: 0; background: #000; overflow: hidden; }
  .scene { position: absolute; inset: 0; width: 100%; height: 100%; }
  .cad { font: 16px "Noto Sans CJK SC", sans-serif; }
  .zero { font: 32px "Open Sans", sans-serif; font-weight: 300; }
  .dimcad { font: 14px "Open Sans", sans-serif; fill: #0a8c8c; }
  .palette { position: absolute; top: 1px; right: 0; width: 33px; height: 245px; background: #fff; border: 1px solid #d0d0d0; border-radius: 3px; display: flex; flex-direction: column; align-items: center; padding-top: 12px; gap: 8px; }
  .palette .tri { margin: -1px 0; }
  .palette hr { width: 23px; margin: -2px 0; border: 0; border-top: 1px solid #555; }
  .two { position: relative; }
  .two b { position: absolute; left: 3px; bottom: 1px; font-size: 8px; line-height: 10px; color: #1a73e8; }
  .hsplit { height: 4px; display: flex; justify-content: center; }
  .hsplit i { width: 100px; background: #5b6472; }
  .vhandle { position: absolute; top: 215px; width: 4px; height: 100px; background: #5b6472; }
  .vhandle.left { left: -4px; }
  .vhandle.right { right: -4px; }

  .bars { flex: none; height: 309px; }
  .btools { flex: none; display: flex; align-items: center; gap: 12px; height: 28px; padding-left: 5px; border-bottom: 1px solid #dcdcdc; }
  .btools button { gap: 4px; }
  .btools .step { margin-right: 4px; }
  .off { color: #aaa; }
  .btable { flex: 1; min-height: 0; display: flex; overflow: hidden; }
  .btable table { flex: 1; align-self: flex-start; }
  .btable .rail { width: 14px; padding: 14px 3px 0 3px; }
  .btable .rail .thumb { height: 102px; }
  .btable th { height: 21px; border-right: 1px solid #dcdcdc; border-bottom: 1px solid #dcdcdc; overflow: hidden; }
  .btable th span { display: flex; align-items: center; justify-content: center; text-align: center; height: 20px; line-height: 14px; white-space: normal; }
  .btable th.on { background: #7fb9fb; color: #fff; font-weight: 700; }
  .btable td { height: 76px; background: #c2dfe1; border-right: 1px solid #d8dcdc; border-bottom: 1px solid #d8dcdc; padding: 0 0 0 3px; color: #000; font: 10px/14px "Liberation Mono", "Noto Sans CJK SC", monospace; white-space: nowrap; overflow: hidden; }
  .btable td.idx { background: #f1f1f1; padding: 0; font: 12px/16px "Open Sans", sans-serif; color: #444; text-align: center; }
  .btable td.idx.on { background: #7fb9fb; color: #fff; }
  .btable td.name, .btable td.zh, .btable td.desc { font: 12px/14px "Noto Sans CJK SC", sans-serif; }
  .btable td.name.on { border-right: 2px solid #777; border-bottom: 2px solid #777; }
  .btable td.shape { padding: 0; }
  .grade { display: block; margin-left: 3px; }
  .shape svg { display: block; margin: 0 auto; }
  .shape text { font: 10px "Liberation Mono", monospace; fill: #000; }
  .btable td.cut { border-right: 0; }
  .hbar { flex: none; height: 14px; display: flex; align-items: center; padding: 0 19px 0 5px; gap: 4px; }
  .hbar > div { flex: 1; }
  .hbar .thumb { width: 76%; height: 8px; }

  .disp { padding: 0; }
  .dtabs { flex: none; display: flex; align-items: flex-end; gap: 3px; height: 28px; padding-left: 2px; border-bottom: 1px solid #d0d3d8; }
  .dtabs button { height: 21px; width: 60px; justify-content: center; background: #dcdcdc; border-radius: 3px 3px 0 0; }
  .dtabs button.on { height: 24px; width: 62px; margin-bottom: -1px; background: #fff; color: #1a73e8; border: 1px solid #c9ccd1; border-bottom: 0; }
  .dtable { flex: 1; min-height: 0; display: flex; overflow: hidden; margin: 2px 2px 0 3px; border: 1px solid #d4d6d9; }
  .dtable table { flex: 1; align-self: flex-start; }
  .dtable th, .dtable td { height: 21px; border-right: 1px solid #dadada; border-bottom: 1px solid #dadada; white-space: nowrap; overflow: hidden; }
  .cc { width: 63px; }
  .dtable .rail { width: 14px; padding: 14px 3px 0 3px; }
  .dtable .rail .thumb { height: 185px; }
  .lv0 { padding-left: 1px; }
  .lv1 { padding-left: 11px; background: linear-gradient(#ddd, #ddd) 7px 0/1px 100% no-repeat; }
  .lv2 { padding-left: 40px; background: linear-gradient(#ddd, #ddd) 7px 0/1px 100% no-repeat, linear-gradient(#ddd, #ddd) 17px 0/1px 100% no-repeat, linear-gradient(#ddd, #ddd) 18px 10px/16px 1px no-repeat; }
  .lv2.end { background: linear-gradient(#ddd, #ddd) 7px 0/1px 100% no-repeat, linear-gradient(#ddd, #ddd) 17px 0/1px 10px no-repeat, linear-gradient(#ddd, #ddd) 18px 10px/16px 1px no-repeat; }
  .ck { text-align: center; }
  .ck input { appearance: none; position: relative; display: block; margin: 0 auto; width: 14px; height: 14px; border: 1px solid #777; border-radius: 2px; background: #fff; }
  .ck input:checked { background: #1f7ae0; border-color: #1f7ae0; }
  .ck input:checked::after { content: ""; position: absolute; left: 2px; top: 2px; width: 7px; height: 4px; border: solid #fff; border-width: 0 0 2px 2px; transform: rotate(-45deg); }
  .ck input.part::after { content: ""; position: absolute; inset: 1px; background: #9dcbff; border: 1px solid #1f7ae0; }
  .ck input:disabled { background: #efefef; border-color: #b5b5b5; }
  .dfoot { flex: none; height: 37px; padding: 6px 8px 0 0; display: flex; justify-content: flex-end; }
  .dfoot .btn { width: 90px; height: 26px; }

  .status { flex: none; height: 32px; display: flex; align-items: center; padding-top: 1px; background: #fcfcfc; }
  .status .s1 { padding-left: 2px; width: 265px; font-size: 13px; }
  .s2 { width: 83px; }
  .s3 { width: 134px; }
  .s4 { width: 102px; }
  .s5 { width: 103px; }
  .sb { display: flex; gap: 3px; margin-right: 6px; }
  .sb button { width: 25px; height: 25px; justify-content: center; border: 1px solid #8d9299; border-radius: 3px; background: #fff; }
  .sb button.wide { width: 36px; gap: 6px; }
  .sb button.on { background: #dbe8fb; border-color: #3a86e8; }
  .sb .apart { margin-left: 3px; }

  .taskbar { flex: none; height: 40px; display: flex; background: linear-gradient(90deg, #cfe3d8 0, #d5dbda 22%, #dadcd8 45%, #dcddd0 55%, #d7dbdb 64%, #d8dbd8 82%, #dcdcca 95%, #d8dbcd 100%); color: #111; }
  .start { width: 48px; justify-content: center; }
  .tsearch { display: flex; align-items: center; gap: 12px; width: 344px; padding-left: 12px; background: #fff; border: 1px solid #c4c8c8; }
  .tsearch input { flex: 1; font-size: 14px; }
  .tsearch input::placeholder { color: #222; }
  .app-b { position: relative; width: 49px; justify-content: center; }
  .app-b.run::after { content: ""; position: absolute; left: 4px; right: 5px; bottom: 0; height: 2px; background: #0a3278; }
  .app-b.two::after { background: linear-gradient(90deg, #0a3278 80%, #6f86ac 80%); }
  .app-b.active { background: #f1f3f2; }
  .app-b.active::after { left: 0; right: 0; }
  .cadico { width: 24px; height: 24px; line-height: 20px; border: 2px solid #6c7c8c; background: #1763b4; color: #fff; font-size: 9px; font-weight: 700; text-align: center; }
  .tray { margin-left: auto; display: flex; align-items: center; gap: 9px; padding-right: 25px; }
  .ime { font-size: 14px; margin: 0 2px 0 4px; }
  .clock { width: 60px; text-align: center; line-height: 19px; margin-right: 9px; }

  .dialog { position: absolute; left: 500px; top: 0; width: 811px; height: 688px; display: flex; flex-direction: column; border: 2px solid #c0c4ca; border-top: 0; background: #fff; box-shadow: 0 0 16px rgba(0, 0, 0, .35); }
  .dtitle { flex: none; display: flex; align-items: center; justify-content: space-between; height: 27px; padding: 0 11px 0 17px; border-bottom: 2px solid #c0c4ca; background: #fdfdfd; font-size: 14px; }
  .drow { flex: none; display: flex; align-items: center; height: 34px; padding: 2px 0 0 2px; border-bottom: 2px solid #c0c4ca; }
  .drow.low { height: 33px; border-bottom-width: 1px; padding-left: 3px; }
  .drow button { margin-right: 14px; }
  .drow button.on { width: 35px; height: 22px; margin-right: 6px; justify-content: center; background: #c1d8f1; border-radius: 3px; }
  .bar { width: 1px; height: 24px; background: #dadada; margin-right: 8px; }
  .bar.near { margin: 0 7px 0 -18px; }
  .drow label { display: flex; align-items: center; gap: 4px; margin-right: 24px; color: #000; }
  .drow input { appearance: none; width: 14px; height: 14px; margin: 0; border: 1px solid #777; border-radius: 50%; background: #fff; }
  .drow input:checked { background: radial-gradient(circle, #1f7ae0 3px, #fff 4px); }
  .drow .tri { margin-left: 5px; border-top-color: #777; }
  .drow .line { border: 1px solid #eee; border-right-color: transparent; height: 22px; padding-left: 1px; margin-right: 9px; }
  .drow .line .tri { margin-right: 3px; }
  .drow .align { margin-left: 5px; }
  .canvas { position: relative; flex: 1; min-height: 0; background: #000; }
  .canvas > svg { display: block; width: 100%; height: 100%; }
  .tick { font: 11px "Liberation Mono", monospace; fill: #4a5462; }
  .big-n text { font: 24px "Liberation Serif", serif; fill: #f4f4f4; }
  .small-n text { font: 16px "Liberation Serif", serif; fill: #00ff00; }
  .over { position: absolute; left: 12px; top: 9px; display: flex; align-items: center; gap: 5px; color: #ddd; }
  .over label { width: 52px; white-space: nowrap; }
  .over .sel { width: 134px; height: 26px; color: #333; }
  .over .sel select { padding: 0 6px; }
  .dstat { flex: none; height: 30px; display: flex; align-items: center; gap: 1px; padding: 0 5px 0 2px; background: #fdfdfd; }
  .dstat button { width: 24px; height: 24px; justify-content: center; background: #dbe8fb; border: 1px solid #3a86e8; border-radius: 3px; }
  .dstat > svg { margin: 12px 0 0 auto; }
</style>
